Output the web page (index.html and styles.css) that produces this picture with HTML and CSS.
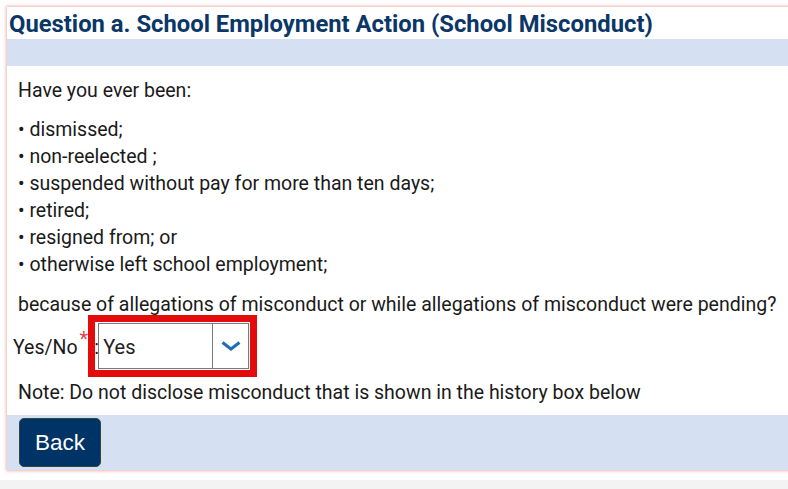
FILE: index.html
```html
<!DOCTYPE html>
<html>
<head>
<meta charset="utf-8">
<link rel="stylesheet" href="styles.css">
</head>
<body>
<div class="page">
  <div class="card">
    <h1 class="title">Question a. School Employment Action (School Misconduct)</h1>
    <div class="band"></div>
    <div class="content">
      <p class="lead">Have you ever been:</p>
      <p class="list">• dismissed;<br>• non-reelected ;<br>• suspended without pay for more than ten days;<br>• retired;<br>• resigned from; or<br>• otherwise left school employment;</p>
      <p class="question">because of allegations of misconduct or while allegations of misconduct were pending?</p>
      <div class="field">
        <span class="label">Yes/No</span><span class="req">*</span><span class="colon">:</span>
        <div class="select-wrap">
          <div class="select">
            <span class="value">Yes</span>
            <span class="arrow">
              <svg width="20" height="10" viewBox="0 0 20 10"><path d="M1.5 1.5 L10 8 L18.5 1.5" fill="none" stroke="#1f6fb8" stroke-width="3" stroke-linecap="butt" stroke-linejoin="miter"/></svg>
            </span>
          </div>
        </div>
      </div>
      <p class="note">Note: Do not disclose misconduct that is shown in the history box below</p>
    </div>
    <div class="footer">
      <button class="back">Back</button>
    </div>
  </div>
</div>
</body>
</html>
```

FILE: styles.css
```css
html, body {
  margin: 0;
  padding: 0;
}
body {
  background: #f3f3f3;
  overflow: hidden;
  font-family: Roboto, "Liberation Sans", Arial, sans-serif;
  color: #1a1a1a;
}
.page {
  background: #ffffff;
  padding: 7px 0 4px 7px;
}
.card {
  width: 820px;
  background: #ffffff;
  box-shadow: 0 0 3px 1px rgba(226, 120, 110, 0.55);
}
.title {
  margin: 0;
  height: 32px;
  padding-left: 2px;
  font-size: 23.8px;
  line-height: 35px;
  font-weight: 700;
  color: #0b3768;
  white-space: nowrap;
}
.band {
  height: 27px;
  background: #d6e0f3;
}
.content {
  padding: 11px 0 9px 11px;
  font-size: 19.5px;
  line-height: 27px;
}
.content p {
  margin: 0;
  white-space: nowrap;
}
.list {
  margin-top: 12px !important;
}
.question {
  margin-top: 13px !important;
}
.field {
  display: flex;
  align-items: center;
  margin-left: -5px;
  margin-top: 5px;
  height: 45px;
}
.label {
  font-size: 19.5px;
  padding-top: 3px;
}
.req {
  color: #e0474a;
  font-size: 20px;
  font-weight: 400;
  align-self: flex-start;
  margin-top: 9px;
  margin-left: 2px;
  line-height: 15px;
}
.colon {
  margin-left: 6px;
  width: 4px;
  padding-top: 3px;
}
.select-wrap {
  position: relative;
  margin-left: 0;
}
.select-wrap::before {
  content: "";
  position: absolute;
  left: -10px;
  top: -8px;
  right: -8px;
  bottom: -8px;
  border: 7px solid #e30b0b;
}
.select {
  position: relative;
  display: flex;
  width: 149px;
  height: 44px;
  border: 1px solid #7a7a7a;
  background: transparent;
}
.value {
  flex: 1;
  padding-left: 4px;
  font-size: 20px;
  line-height: 47px;
  color: #222;
}
.arrow {
  width: 35px;
  border-left: 1px solid #7a7a7a;
  display: flex;
  align-items: center;
  justify-content: center;
}
.note {
  margin-top: 11px !important;
}
.footer {
  height: 55px;
  background: #d6e0f3;
  padding: 3px 0 0 12px;
  box-sizing: border-box;
  margin-bottom: 6px;
}
.back {
  width: 82px;
  height: 49px;
  background: #003366;
  border: 1px solid #2d4a3c;
  border-radius: 5px;
  color: #ffffff;
  font-family: "Liberation Sans", Arial, sans-serif;
  font-size: 22.5px;
  padding: 0;
  cursor: pointer;
}
```
